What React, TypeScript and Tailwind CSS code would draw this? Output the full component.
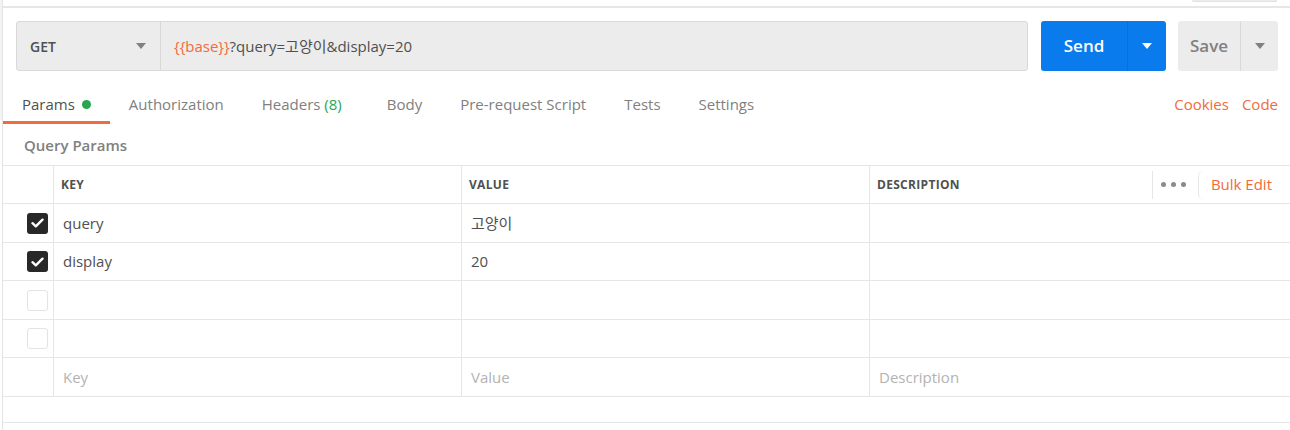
import React from "react";

function Caret({ color }: { color: string }) {
  return (
    <svg width="10" height="6" viewBox="0 0 10 6">
      <path d="M0 0 L10 0 L5 6 Z" fill={color} />
    </svg>
  );
}

function Checked() {
  return (
    <div className="w-[21px] h-[21px] rounded-[3px] bg-[#282828] flex items-center justify-center">
      <svg width="13" height="10" viewBox="0 0 13 10">
        <path d="M1.5 5.2 L4.8 8.3 L11.5 1.7" fill="none" stroke="#ffffff" strokeWidth="2.4" strokeLinecap="round" strokeLinejoin="round" />
      </svg>
    </div>
  );
}

function Empty() {
  return <div className="w-[21px] h-[21px] rounded-[3px] border border-[#e3e3e3] bg-white" />;
}

type Row = { check: "on" | "off" | "none"; key: string; value: string; desc: string; placeholder?: boolean; h: string };

const rows: Row[] = [
  { check: "on", key: "query", value: "고양이", desc: "", h: "h-[39px]" },
  { check: "on", key: "display", value: "20", desc: "", h: "h-[38px]" },
  { check: "off", key: "", value: "", desc: "", h: "h-[39px]" },
  { check: "off", key: "", value: "", desc: "", h: "h-[38px]" },
  { check: "none", key: "Key", value: "Value", desc: "Description", placeholder: true, h: "h-[39px]" },
];

export default function App() {
  return (
    <div className="w-[1290px] h-[430px] overflow-hidden bg-white flex font-['Open_Sans','Noto_Sans_CJK_KR',sans-serif] text-[#505050]">
      <div className="w-[2px] shrink-0 flex flex-col">
        <div className="h-[120px] bg-[#f3f3f3]" />
      </div>
      <div className="w-px shrink-0 bg-[#e3e3e3]" />
      <div className="flex-1 flex flex-col min-w-0">
        {/* top band */}
        <div className="h-[6px] flex justify-end pr-[13px]">
          <div className="w-[85px] h-[2px] bg-[#ececec] border border-t-0 border-[#e2e2e2] rounded-b-[3px]" />
        </div>
        <div className="h-[2px] bg-[#e6e6e6]" />

        {/* request row */}
        <div className="flex mt-[13px] pl-[13px] pr-[12px] h-[50px]">
          <div className="flex-1 flex bg-[#ececec] border border-[#d9d9d9] rounded-[3px]">
            <div className="w-[144px] shrink-0 flex items-center justify-between pl-[13px] pr-[14px] border-r border-[#d9d9d9]">
              <span className="text-[14px] font-semibold text-[#505050]">GET</span>
              <Caret color="#808080" />
            </div>
            <div className="flex items-center pl-[13px] text-[15px] text-[#505050]">
              <span className="text-[#f26b3a]">{"{{base}}"}</span>
              <span>?query=고양이&amp;display=20</span>
            </div>
          </div>
          <div className="ml-[13px] w-[125px] flex bg-[#097bed] rounded-[3px]">
            <div className="w-[86px] flex items-center justify-center text-[17px] font-semibold text-white">Send</div>
            <div className="w-px bg-[#0a6ed6]" />
            <div className="flex-1 flex items-center justify-center">
              <Caret color="#ffffff" />
            </div>
          </div>
          <div className="ml-[12px] w-[100px] flex bg-[#ececec] rounded-[3px]">
            <div className="w-[62px] flex items-center justify-center text-[17px] font-semibold text-[#808080]">Save</div>
            <div className="w-px bg-[#d9d9d9]" />
            <div className="flex-1 flex items-center justify-center">
              <Caret color="#808080" />
            </div>
          </div>
        </div>

        {/* tabs */}
        <div className="flex text-[15px] leading-[20px]">
          <div className="px-[19px] pt-[23px] pb-[7px] border-b-[3px] border-[#f26b3a] flex items-center gap-[7px] text-[#505050]">
            <span>Params</span>
            <span className="w-[9px] h-[9px] rounded-full bg-[#26a650]" />
          </div>
          <div className="px-[19px] pt-[23px] pb-[10px] text-[#808080]">Authorization</div>
          <div className="pl-[19px] pr-[26px] pt-[23px] pb-[10px] text-[#808080]">
            Headers <span className="text-[#26a650]">(8)</span>
          </div>
          <div className="px-[19px] pt-[23px] pb-[10px] text-[#808080]">Body</div>
          <div className="px-[19px] pt-[23px] pb-[10px] text-[#808080]">Pre-request Script</div>
          <div className="px-[19px] pt-[23px] pb-[10px] text-[#808080]">Tests</div>
          <div className="px-[19px] pt-[23px] pb-[10px] text-[#808080]">Settings</div>
          <div className="flex-1" />
          <div className="flex gap-[13px] pt-[23px] pr-[12px] text-[#f26b3a]">
            <span>Cookies</span>
            <span>Code</span>
          </div>
        </div>

        {/* query params title */}
        <div className="pl-[21px] pt-[11px] pb-[10px] text-[15px] leading-[20px] font-semibold text-[#808080]">Query Params</div>

        {/* table */}
        <div className="border-t border-[#e6e6e6]">
          <div className="flex h-[38px] border-b border-[#e6e6e6] text-[12px] tracking-[0.3px] font-bold text-[#505050]">
            <div className="w-[51px] shrink-0 border-r border-[#e6e6e6]" />
            <div className="w-[408px] shrink-0 border-r border-[#e6e6e6] pl-[7px] flex items-center">KEY</div>
            <div className="w-[408px] shrink-0 border-r border-[#e6e6e6] pl-[7px] flex items-center">VALUE</div>
            <div className="flex-1 flex items-center pl-[7px]">
              <span className="flex-1">DESCRIPTION</span>
              <div className="w-px h-[28px] bg-[#e6e6e6]" />
              <div className="pl-[8px] pr-[12px] flex items-center gap-[5px]">
                <span className="w-[5px] h-[5px] rounded-full bg-[#8a8a8a]" />
                <span className="w-[5px] h-[5px] rounded-full bg-[#8a8a8a]" />
                <span className="w-[5px] h-[5px] rounded-full bg-[#8a8a8a]" />
              </div>
              <div className="h-[28px] border-l border-[#e6e6e6] rounded-l-[5px] pl-[12px] pr-[18px] flex items-center text-[15px] tracking-normal font-normal text-[#f26b3a]">
                Bulk Edit
              </div>
            </div>
          </div>
          {rows.map((r, i) => (
            <div key={i} className={`flex ${r.h} border-b border-[#e6e6e6] text-[15px] ${r.placeholder ? "text-[#b3b3b3]" : "text-[#505050]"}`}>
              <div className="w-[51px] shrink-0 border-r border-[#e6e6e6] flex items-center justify-end pr-[5px]">
                {r.check === "on" ? <Checked /> : r.check === "off" ? <Empty /> : null}
              </div>
              <div className="w-[408px] shrink-0 border-r border-[#e6e6e6] pl-[9px] flex items-center">{r.key}</div>
              <div className="w-[408px] shrink-0 border-r border-[#e6e6e6] pl-[9px] flex items-center">{r.value}</div>
              <div className="flex-1 flex items-center pl-[9px]">{r.desc}</div>
            </div>
          ))}
          <div className="h-[26px] border-b border-[#e6e6e6]" />
        </div>
      </div>
    </div>
  );
}
